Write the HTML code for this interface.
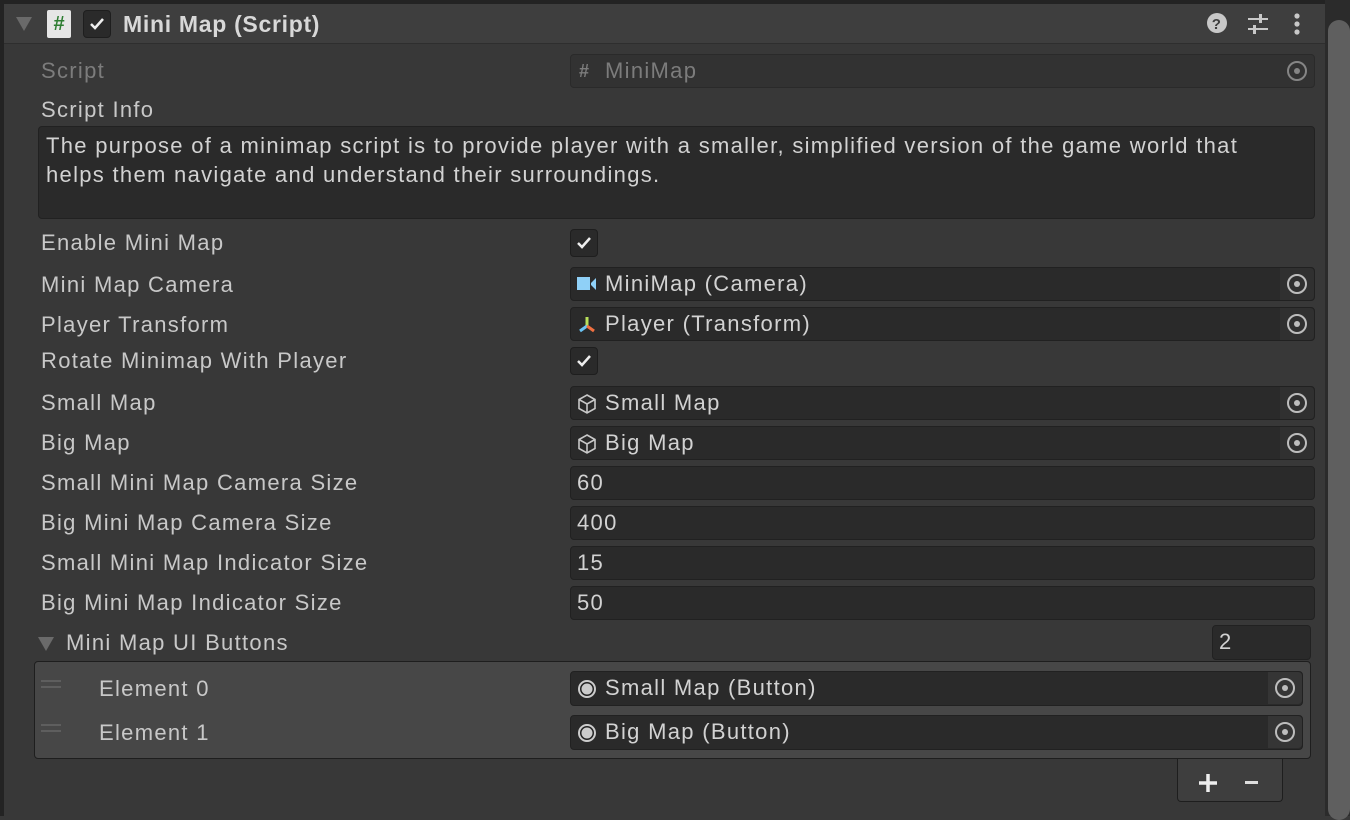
<!DOCTYPE html>
<html><head><style>
*{box-sizing:border-box;margin:0;padding:0}
body{width:1350px;height:816px;background:#383838;font-family:"Liberation Sans",sans-serif;color:#c8c8c8;font-size:22px;letter-spacing:1.3px;position:relative;overflow:hidden}
.a{position:absolute}
.lbl{position:absolute;left:41px;line-height:24px}
.f{position:absolute;left:570px;width:745px;height:34px;background:#2a2a2a;border:1px solid #212121;border-radius:4px;line-height:32px;padding-left:34px;color:#d2d2d2}
.f.n{padding-left:6px}
.pk{position:absolute;right:0;top:0;width:34px;height:32px;background:#303030;border-radius:0 4px 4px 0}
.pk:after{content:"";position:absolute;left:7px;top:6px;width:20px;height:20px;border:2px solid #bdbdbd;border-radius:50%;box-sizing:border-box}
.pk:before{content:"";position:absolute;left:14px;top:13px;width:6px;height:6px;background:#bdbdbd;border-radius:50%;z-index:1}
.cb{position:absolute;left:570px;width:28px;height:28px;background:#2a2a2a;border:1px solid #1e1e1e;border-radius:4px}
.ic{position:absolute;left:6px;top:7px}
</style></head><body>
<div class="a" style="left:0;top:0;width:1350px;height:4px;background:#232323"></div>
<div class="a" style="left:0;top:0;width:4px;height:816px;background:#232323"></div>
<div class="a" style="left:1325px;top:0;width:25px;height:816px;background:#2b2b2b"></div>
<div class="a" style="left:1328px;top:20px;width:22px;height:800px;background:#5f5f5f;border-radius:11px"></div>
<div class="a" style="left:4px;top:4px;width:1321px;height:40px;background:#3e3e3e;border-bottom:1px solid #2e2e2e"></div>
<div class="a" style="left:16px;top:17px;width:0;height:0;border-left:8px solid transparent;border-right:8px solid transparent;border-top:14px solid #6a6a6a"></div>
<div class="a" style="left:47px;top:10px;width:24px;height:28px;background:#e6e6e6;border-radius:2px;color:#2e7d32;font-weight:bold;font-size:20px;text-align:center;line-height:28px;letter-spacing:0">#</div>
<div class="a" style="left:83px;top:10px;width:28px;height:28px;background:#2a2a2a;border:1px solid #1e1e1e;border-radius:4px"><svg width="28" height="28" class="a" style="left:-1px;top:-1px"><path d="M8 14l4 4 8-9" stroke="#eee" stroke-width="2.5" fill="none"/></svg></div>
<div class="a" style="left:123px;top:11px;font-size:23px;font-weight:bold;color:#d8d8d8;letter-spacing:0.7px">Mini Map (Script)</div>
<svg class="a" style="left:1206px;top:12px" width="22" height="22"><circle cx="11" cy="11" r="10" fill="#c8c8c8"/><text x="11" y="17" font-size="15" font-weight="bold" text-anchor="middle" fill="#3e3e3e" font-family="Liberation Sans">?</text></svg>
<svg class="a" style="left:1246px;top:12px" width="24" height="24"><path d="M2 7h20M2 17h20" stroke="#c8c8c8" stroke-width="2"/><rect x="13" y="2" width="3" height="9" fill="#c8c8c8"/><rect x="7" y="13" width="3" height="9" fill="#c8c8c8"/></svg>
<svg class="a" style="left:1290px;top:12px" width="14" height="24"><circle cx="7" cy="4" r="2.6" fill="#c8c8c8"/><circle cx="7" cy="12" r="2.6" fill="#c8c8c8"/><circle cx="7" cy="20" r="2.6" fill="#c8c8c8"/></svg>

<div class="lbl" style="top:59px;color:#7c7c7c">Script</div>
<div class="f" style="top:54px;color:#7c7c7c;background:#323232;border-color:#2a2a2a"><span class="a" style="left:8px;top:0;color:#7c7c7c;font-weight:bold;font-size:18px">#</span>MiniMap<div class="pk" style="background:#323232;opacity:.6"></div></div>
<div class="lbl" style="top:98px">Script Info</div>
<div class="a" style="left:38px;top:126px;width:1277px;height:93px;background:#2a2a2a;border:1px solid #212121;border-radius:4px;padding:4px 7px;line-height:29px;color:#d2d2d2">The purpose of a minimap script is to provide player with a smaller, simplified version of the game world that<br>helps them navigate and understand their surroundings.</div>

<div class="lbl" style="top:231px">Enable Mini Map</div>
<div class="cb" style="top:229px"><svg width="28" height="28" class="a" style="left:-1px;top:-1px"><path d="M8 14l4 4 8-9" stroke="#eee" stroke-width="2.5" fill="none"/></svg></div>
<div class="lbl" style="top:273px">Mini Map Camera</div>
<div class="f" style="top:267px"><svg class="ic" width="20" height="18"><rect x="0" y="2" width="13" height="13" fill="#8fd0f7"/><path d="M14 8l5-5v12l-5-5z" fill="#8fd0f7"/></svg>MiniMap (Camera)<div class="pk"></div></div>
<div class="lbl" style="top:313px">Player Transform</div>
<div class="f" style="top:307px"><svg class="ic" width="20" height="20"><path d="M10 2v9" stroke="#b8e05a" stroke-width="3"/><path d="M10 11l-7 5" stroke="#6ac4f5" stroke-width="3"/><path d="M10 11l7 5" stroke="#f07040" stroke-width="3"/></svg>Player (Transform)<div class="pk"></div></div>
<div class="lbl" style="top:349px">Rotate Minimap With Player</div>
<div class="cb" style="top:347px"><svg width="28" height="28" class="a" style="left:-1px;top:-1px"><path d="M8 14l4 4 8-9" stroke="#eee" stroke-width="2.5" fill="none"/></svg></div>
<div class="lbl" style="top:391px">Small Map</div>
<div class="f" style="top:386px"><svg class="ic" width="20" height="20"><path d="M10 1l8 4.5v9L10 19l-8-4.5v-9z M2 5.5l8 4.5 8-4.5 M10 10v9" stroke="#c8c8c8" stroke-width="1.6" fill="none"/></svg>Small Map<div class="pk"></div></div>
<div class="lbl" style="top:431px">Big Map</div>
<div class="f" style="top:426px"><svg class="ic" width="20" height="20"><path d="M10 1l8 4.5v9L10 19l-8-4.5v-9z M2 5.5l8 4.5 8-4.5 M10 10v9" stroke="#c8c8c8" stroke-width="1.6" fill="none"/></svg>Big Map<div class="pk"></div></div>
<div class="lbl" style="top:471px">Small Mini Map Camera Size</div>
<div class="f n" style="top:466px">60</div>
<div class="lbl" style="top:511px">Big Mini Map Camera Size</div>
<div class="f n" style="top:506px">400</div>
<div class="lbl" style="top:551px">Small Mini Map Indicator Size</div>
<div class="f n" style="top:546px">15</div>
<div class="lbl" style="top:591px">Big Mini Map Indicator Size</div>
<div class="f n" style="top:586px">50</div>

<div class="a" style="left:38px;top:637px;width:0;height:0;border-left:8px solid transparent;border-right:8px solid transparent;border-top:14px solid #6a6a6a"></div>
<div class="lbl" style="left:66px;top:631px">Mini Map UI Buttons</div>
<div class="f n" style="left:1212px;top:625px;width:99px;height:35px">2</div>
<div class="a" style="left:34px;top:661px;width:1277px;height:98px;background:#474747;border:1px solid #1e1e1e;border-radius:4px"></div>
<div class="a" style="left:41px;top:680px;width:20px;height:2px;background:#5e5e5e"></div>
<div class="a" style="left:41px;top:686px;width:20px;height:2px;background:#5e5e5e"></div>
<div class="a" style="left:41px;top:724px;width:20px;height:2px;background:#5e5e5e"></div>
<div class="a" style="left:41px;top:730px;width:20px;height:2px;background:#5e5e5e"></div>
<div class="lbl" style="left:99px;top:677px">Element 0</div>
<div class="f" style="top:671px;width:733px;height:35px"><svg class="ic" width="20" height="20" style="top:7px"><circle cx="10" cy="10" r="8" fill="#222" stroke="#ccc" stroke-width="2"/><circle cx="10" cy="10" r="5.5" fill="#ccc"/></svg>Small Map (Button)<div class="pk" style="background:#353535"></div></div>
<div class="lbl" style="left:99px;top:721px">Element 1</div>
<div class="f" style="top:715px;width:733px;height:35px"><svg class="ic" width="20" height="20" style="top:7px"><circle cx="10" cy="10" r="8" fill="#222" stroke="#ccc" stroke-width="2"/><circle cx="10" cy="10" r="5.5" fill="#ccc"/></svg>Big Map (Button)<div class="pk" style="background:#353535"></div></div>
<div class="a" style="left:1177px;top:759px;width:106px;height:43px;background:#3e3e3e;border:1px solid #1e1e1e;border-top:none;border-radius:0 0 4px 4px"></div>
<svg class="a" style="left:1198px;top:773px" width="20" height="20"><path d="M10 1v18M1 10h18" stroke="#eee" stroke-width="3.5"/></svg>
<div class="a" style="left:1245px;top:781px;width:13px;height:3px;background:#ddd"></div>
</body></html>
